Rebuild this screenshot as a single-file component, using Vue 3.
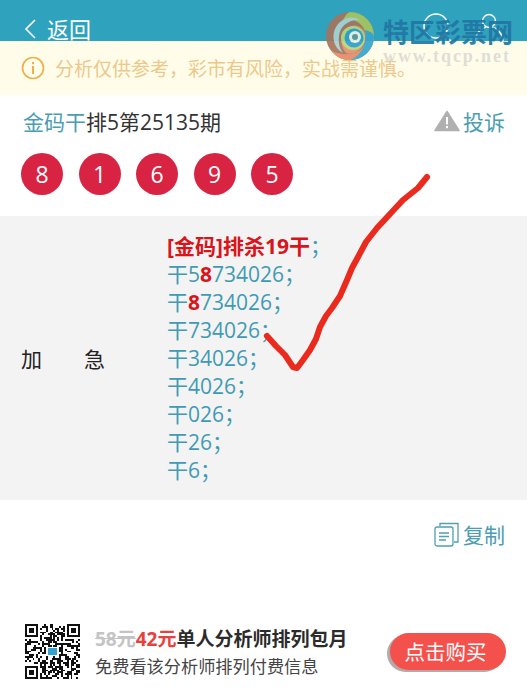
<template>
  <div class="page">
    <header class="topbar">
      <div class="back">
        <svg class="back-icon" width="12" height="20" viewBox="0 0 12 20"><path d="M11 1 L2 10 L11 19" fill="none" stroke="#fff" stroke-width="1.6" /></svg>
        <span>返回</span>
      </div>
      <div class="top-icons">
        <svg width="30" height="29" viewBox="0 0 30 29"><circle cx="14" cy="14" r="12" fill="none" stroke="#fff" stroke-width="1.5" /><path d="M23 23 L29 29" stroke="#fff" stroke-width="1.5" /></svg>
        <svg width="32" height="29" viewBox="0 0 32 29"><circle cx="16" cy="9" r="6.5" fill="none" stroke="#fff" stroke-width="1.4" /><path d="M2 29 C3 20 9 16 13 15 M30 29 C29 20 23 16 19 15" fill="none" stroke="#fff" stroke-width="1.4" /></svg>
      </div>
    </header>

    <div class="notice">
      <svg width="24" height="24" viewBox="0 0 24 24"><circle cx="12" cy="12" r="10.5" fill="none" stroke="#efb04c" stroke-width="1.7" /><rect x="11" y="10" width="2" height="8" fill="#efb04c" /><rect x="11" y="6" width="2" height="2.2" fill="#efb04c" /></svg>
      <span>分析仅供参考，彩市有风险，实战需谨慎。</span>
    </div>

    <div class="title-row">
      <div class="title"><span class="teal">金码干</span>排5第25135期</div>
      <div class="report">
        <svg width="26" height="22" viewBox="0 0 26 22"><path d="M13 1.5 L25 20.5 L1 20.5 Z" fill="#b0b0b0" stroke="#b0b0b0" stroke-width="1.5" stroke-linejoin="round" /><rect x="12" y="7" width="2" height="7.5" fill="#fff" /><rect x="12" y="16" width="2" height="2.2" fill="#fff" /></svg>
        <span>投诉</span>
      </div>
    </div>

    <div class="balls">
      <span v-for="(n, i) in balls" :key="i" class="ball">{{ n }}</span>
    </div>

    <section class="panel">
      <div class="label"><span>加</span><span>急</span></div>
      <div class="lines">
        <div class="line"><b class="red">[金码]排杀19干</b>；</div>
        <div class="line">干5<b class="red">8</b>734026；</div>
        <div class="line">干<b class="red">8</b>734026；</div>
        <div v-for="l in lines" :key="l" class="line">{{ l }}；</div>
      </div>
    </section>

    <div class="copy-row">
      <svg width="25" height="25" viewBox="0 0 25 25" fill="none" stroke="#4fa0b3" stroke-width="1.3"><path d="M6 4 V1.5 H24 V20 H20" /><rect x="1" y="5" width="18" height="19" rx="2" /><path d="M5 11 H15 M5 14.5 H15 M5 18 H12" /></svg>
      <span>复制</span>
    </div>

    <footer class="buy">
      <svg class="qr" width="55" height="55" viewBox="0 0 29 29" shape-rendering="crispEdges">
        <rect v-for="c in qrCells" :key="c.k" :x="c.x" :y="c.y" width="1" height="1" fill="#111" />
        <rect x="11" y="12" width="7" height="5" fill="#fff" />
        <rect x="12" y="12.5" width="5" height="4" fill="#35a3d0" />
      </svg>
      <div class="buy-text">
        <div class="buy-title"><s>58元</s><em>42元</em>单人分析师排列包月</div>
        <div class="buy-sub">免费看该分析师排列付费信息</div>
      </div>
      <button class="buy-btn">点击购买</button>
    </footer>

    <!-- 站点水印 -->
    <div class="watermark">
      <svg width="48" height="50" viewBox="0 0 48 50">
        <circle cx="24" cy="25" r="24" fill="#a5755f" />
        <path d="M24 1 A24 24 0 0 1 48 25 C48 39 37 49 24 49 C16 49 10 46 6 40 C14 45 24 45 32 41 C40 36 42 26 38 18 C34 10 26 7 17 9 C19 5 21 2 24 1 Z" fill="#a9c45e" />
        <path d="M48 25 C48 39 37 49 24 49 C30 46 36 41 38 34 C40 28 40 24 39 19 C44 20 47 22 48 25 Z" fill="#37a5cd" />
        <path d="M24 49 C16 49 10 46 6 40 C14 44 24 44 32 41 C36 39 36 39 38 34 C36 41 30 47 24 49 Z" fill="#e58a68" />
        <path d="M17 42 C6 36 4 20 14 11 C20 6 28 5 34 9 C24 8 14 14 13 25 C12 33 14 38 17 42 Z" fill="#a9d2d2" />
        <path d="M20 42 C14 36 14 24 20 18 C26 12 36 14 39 22 C41 30 36 40 28 42 C25 43 22 43 20 42 Z" fill="#e0916e" />
        <circle cx="27" cy="27" r="12" fill="#b7d67a" />
        <circle cx="28" cy="27" r="9.5" fill="#2d9fcb" />
        <circle cx="29" cy="26" r="6" fill="#eef2e4" />
        <circle cx="29" cy="26" r="3" fill="#5d9a94" />
      </svg>
      <div class="wm-text">
        <div class="wm-cn">特区彩票网</div>
        <div class="wm-en">www.tqcp.net</div>
      </div>
    </div>

    <!-- 手写的红色对勾 -->
    <svg class="check" width="527" height="689" viewBox="0 0 527 689">
      <path d="M427 177 L418 188 L403 200 L390 214 L377 228 L366 242 L358 257 L352 268 L347 280 L340 296 L332 308 L326 316 L320 327 L316 339 L310 350 L303 360 L297 368 L293 367 L285 355 L276 346 L267 336" fill="none" stroke="#ea2a1c" stroke-width="6" stroke-linecap="round" stroke-linejoin="round" />
    </svg>
  </div>
</template>

<script setup>
const balls = [8, 1, 6, 9, 5]
const lines = ['干734026', '干34026', '干4026', '干026', '干26', '干6']

// 二维码只是装饰，用固定种子生成
const finder = (x, y) => {
  const inBox = (ox, oy) => x >= ox && x < ox + 7 && y >= oy && y < oy + 7
  const draw = (ox, oy) => {
    const dx = x - ox
    const dy = y - oy
    return dx === 0 || dx === 6 || dy === 0 || dy === 6 || (dx >= 2 && dx <= 4 && dy >= 2 && dy <= 4)
  }
  if (inBox(0, 0)) return draw(0, 0)
  if (inBox(22, 0)) return draw(22, 0)
  if (inBox(0, 22)) return draw(0, 22)
  return null
}

const qrCells = []
let seed = 1337
for (let y = 0; y < 29; y++) {
  for (let x = 0; x < 29; x++) {
    seed = (seed * 1103515245 + 12345) & 0x7fffffff
    let on = finder(x, y)
    if (on === null) {
      const nearFinder = (x < 8 && y < 8) || (x > 20 && y < 8) || (x < 8 && y > 20)
      on = !nearFinder && (seed >> 16) % 100 < 52
    }
    if (on) qrCells.push({ k: x + '-' + y, x, y })
  }
}
</script>

<style>
html, body {
  margin: 0;
  background: #fff;
}
</style>

<style scoped>
.page {
  position: relative;
  width: 527px;
  height: 689px;
  overflow: hidden;
  background: #fff;
  font-family: "Open Sans", "Noto Sans CJK SC", sans-serif;
  color: #333;
}

.topbar {
  height: 41px;
  background: #2fa3bd;
  display: flex;
  justify-content: space-between;
  color: #fff;
}

.back {
  display: flex;
  align-items: center;
  box-sizing: border-box;
  height: 41px;
  padding: 18px 0 1px 24px;
  font-size: 22px;
  line-height: 22px;
}

.back-icon {
  margin-right: 11px;
}

.top-icons {
  display: flex;
  gap: 21px;
  padding: 12px 22px 0 0;
}

.notice {
  height: 54px;
  background: #fffdea;
  display: flex;
  align-items: center;
  gap: 10px;
  padding-left: 21px;
  font-size: 19px;
  color: #ecc88a;
}

.title-row {
  display: flex;
  justify-content: space-between;
  align-items: center;
  padding: 11px 22px 0 23px;
  font-size: 21px;
  height: 30px;
}

.teal {
  color: #4b9db2;
}

.report {
  display: flex;
  align-items: center;
  gap: 3px;
  color: #4b9db2;
}

.balls {
  display: flex;
  gap: 15.5px;
  padding: 17px 0 21px 21px;
}

.ball {
  width: 42px;
  height: 42px;
  border-radius: 50%;
  background: #d92343;
  color: #fff;
  font-size: 23px;
  line-height: 42px;
  text-align: center;
}

.panel {
  background: #f3f3f3;
  height: 284px;
  box-sizing: border-box;
  display: flex;
  align-items: center;
  padding-left: 21px;
}

.label {
  width: 84px;
  margin-right: 62px;
  display: flex;
  justify-content: space-between;
  font-size: 21px;
  color: #222;
}

.lines {
  font-size: 21px;
  line-height: 28px;
  color: #3f9bb3;
}

.red {
  color: #d9141a;
}

.copy-row {
  height: 70px;
  box-sizing: border-box;
  display: flex;
  justify-content: flex-end;
  align-items: center;
  gap: 4px;
  padding: 0 22px 2px 0;
  font-size: 21px;
  color: #4b9db2;
}

.buy {
  margin-top: 52px;
  display: flex;
  align-items: center;
  padding-left: 25px;
}

.qr {
  flex: none;
}

.buy-text {
  margin-left: 15px;
  width: 295px;
  padding-top: 4px;
}

.buy-title {
  font-size: 19px;
  line-height: 27px;
  font-weight: 700;
  color: #2b2b2b;
}

.buy-title s {
  color: #c4c4c4;
}

.buy-title em {
  font-style: normal;
  color: #e8403c;
}

.buy-sub {
  font-size: 17.2px;
  line-height: 27px;
  color: #444;
}

.buy-btn {
  width: 116px;
  height: 37px;
  border: 0;
  padding: 0 5px 0 0;
  border-radius: 19px;
  background: #f4504c;
  box-shadow: -3px 2px 0 #b5a9a9;
  color: #fff;
  font-family: inherit;
  font-size: 20.5px;
}

.watermark {
  position: absolute;
  left: 326px;
  top: 11px;
  display: flex;
  gap: 9px;
  opacity: 0.92;
  pointer-events: none;
}

.wm-text {
  padding-top: 5px;
}

.wm-cn {
  font-size: 26px;
  line-height: 32px;
  font-weight: 700;
  color: #2276a4;
  white-space: nowrap;
}

.wm-en {
  font-family: "Liberation Serif", serif;
  font-size: 18px;
  line-height: 16px;
  font-weight: 700;
  letter-spacing: 1.9px;
  color: #dcdcd6;
  white-space: nowrap;
}

.check {
  position: absolute;
  left: 0;
  top: 0;
  pointer-events: none;
}
</style>
